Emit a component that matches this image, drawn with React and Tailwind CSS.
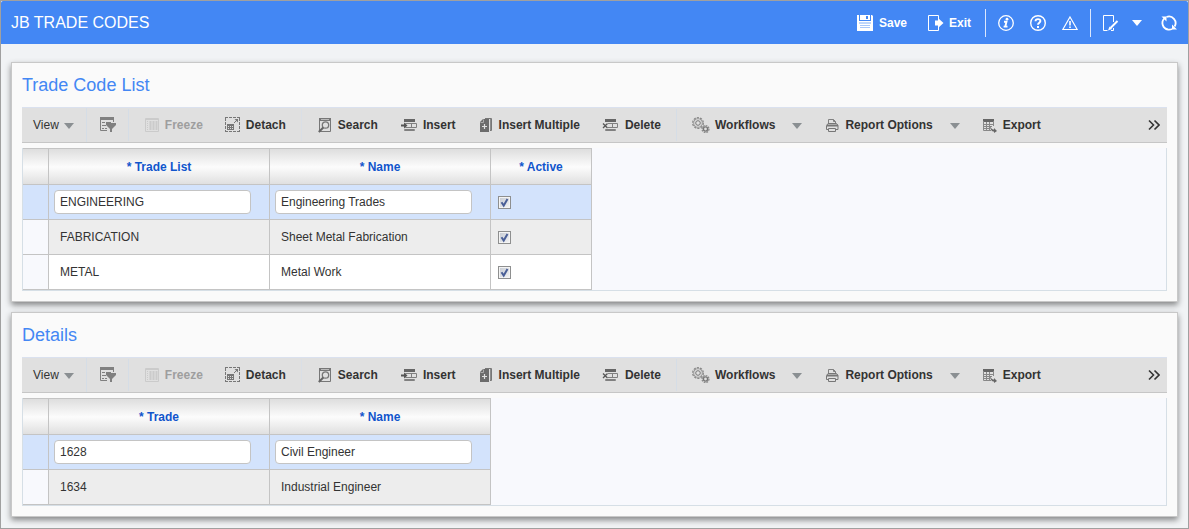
import React, { useState } from 'react';

/* ---------- header icons (white) ---------- */

const SaveIcon = () => (
    <svg width="16" height="16" viewBox="0 0 16 16" fill="none" aria-hidden="true">
        <path d="M0 0h2v6h12V0h1l1 1v15H0z" fill="#fff" />
        <path d="M3 0h10v5H3z" fill="#fff" />
        <path d="M9 1h2v3H9z" fill="#4387f4" />
        <path d="M2 8h12" stroke="#7faef8" />
        <path d="M3 10.500h10M3 12.500h10" stroke="#a9c8fa" />
    </svg>
);

const ExitIcon = () => (
    <svg width="16" height="16" viewBox="0 0 16 16" fill="none" aria-hidden="true">
        <path d="M10.500 4V.5H.5v15h10V12" stroke="#fff" />
        <path d="M7 5.500h3V3l5.500 5-5.500 5v-2.500H7z" fill="#fff" />
    </svg>
);

const InfoIcon = () => (
    <svg width="16" height="16" viewBox="0 0 16 16" fill="none" aria-hidden="true">
        <circle cx="8" cy="8" r="7.300" stroke="#fff" strokeWidth="1.300" />
        <circle cx="9" cy="4.200" r="1.400" fill="#fff" />
        <path d="M6 6.800h2.500L7.300 11.600h2.200M5.600 11.600h2" stroke="#fff" strokeWidth="1.900" />
    </svg>
);

const HelpIcon = () => (
    <svg width="16" height="16" viewBox="0 0 16 16" fill="none" aria-hidden="true">
        <circle cx="8" cy="8" r="7.300" stroke="#fff" strokeWidth="1.400" />
        <path d="M5.500 6.300C5.500 3.400 10.400 3.400 10.400 6.100 10.400 7.700 8 7.700 8 9.800" stroke="#fff" strokeWidth="1.900" />
        <path d="M7 11h2v2H7z" fill="#fff" />
    </svg>
);

const WarningIcon = () => (
    <svg width="16" height="16" viewBox="0 0 16 16" fill="none" aria-hidden="true">
        <path d="M8 2 15.200 14.500H.8z" stroke="#fff" strokeWidth="1.200" />
        <path d="M8 6v4.500M8 11.500v1.500" stroke="#fff" strokeWidth="1.600" />
    </svg>
);

const EditIcon = () => (
    <svg width="16" height="16" viewBox="0 0 16 16" fill="none" aria-hidden="true">
        <path d="M10.500 7V.5H.5v15h4M10.500 13v2.500H8" stroke="#fff" />
        <path d="M14.500 6 7.500 13" stroke="#fff" strokeWidth="2" />
        <path d="M6.500 11.500 5 15.500 9 14z" fill="#fff" />
    </svg>
);

const RefreshIcon = () => (
    <svg width="18" height="16" viewBox="0 0 18 16" fill="none" aria-hidden="true">
        <path d="M8 14.500A6.600 6.600 0 0 1 4.200 3.500" stroke="#fff" strokeWidth="1.800" />
        <path d="M6.500 2A6.600 6.600 0 0 1 14.600 11.500" stroke="#fff" strokeWidth="1.800" />
        <path d="M8 14.600A6.600 6.600 0 0 0 12 14" stroke="#fff" strokeWidth="1.800" />
        <path d="M1.500 1.500h5v5z" fill="#fff" />
        <path d="M17 14.500h-5v-5z" fill="#fff" />
    </svg>
);

/* ---------- toolbar icons (grey) ---------- */

const FilterIcon = () => (
    <svg width="18" height="16" viewBox="0 0 18 16" fill="none" aria-hidden="true">
        <path d="M1 0h14v3H1z" fill="#808080" />
        <path d="M1.500 3v10.500H8M14.500 3v2" stroke="#808080" />
        <path d="M3 5.500h3M7 5.500h5M3 8.500h4M3 11.500h2M6 11.500h2" stroke="#808080" />
        <path d="M7 6h10v2l-4 4v3h-2v-3L7 8z" fill="#808080" />
    </svg>
);

const FreezeIcon = () => (
    <svg width="16" height="16" viewBox="0 0 16 16" fill="none" aria-hidden="true">
        <path d="M1.500 1.500h13v13h-13zM1 2.500h14" stroke="#cbcbcb" />
        <path d="M3.500 4v9" stroke="#cbcbcb" strokeDasharray="1 1" />
        <path d="M6.500 4v9M9.500 4v9M12.500 4v9" stroke="#cbcbcb" strokeWidth="2" />
    </svg>
);

const DetachIcon = () => (
    <svg width="16" height="16" viewBox="0 0 16 16" fill="none" aria-hidden="true">
        <path d="M0 .5h15M0 14.500h15M.5 1v13M14.500 1v13" stroke="#777" strokeDasharray="3 1" />
        <path d="M2 7h7v6H2z" fill="#777" />
        <path d="M3 9.500h5M3 11.500h5" stroke="#e0e0e0" strokeDasharray="1 1" />
        <path d="M9 6 12 3" stroke="#777" />
        <path d="M9.500 2H13v3.500z" fill="#777" />
    </svg>
);

const SearchIcon = () => (
    <svg width="16" height="16" viewBox="0 0 16 16" fill="none" aria-hidden="true">
        <path d="M2.500 1.500h11v13h-11z" stroke="#777" />
        <path d="M2 1h12v3H2z" fill="#777" />
        <path d="M4 2.500h8" stroke="#bbb" />
        <circle cx="8.500" cy="8" r="3.200" fill="#e0e0e0" stroke="#777" strokeWidth="1.300" />
        <path d="M6.300 10.500 1.800 15" stroke="#666" strokeWidth="2" />
    </svg>
);

const InsertIcon = () => (
    <svg width="18" height="16" viewBox="0 0 18 16" fill="none" aria-hidden="true">
        <path d="M4 2h11v3H4z" fill="#666" />
        <path d="M5.500 6.500h11v4h-11zM11.500 6.500v4" stroke="#808080" />
        <path d="M4.500 12.500h10v1h-10z" stroke="#808080" />
        <path d="M1 8.500h5" stroke="#555" strokeWidth="2" />
        <path d="M4 5.500 7.500 8.500 4 11.500z" fill="#555" />
    </svg>
);

const InsertMultipleIcon = () => (
    <svg width="16" height="16" viewBox="0 0 16 16" fill="none" aria-hidden="true">
        <path d="M2 5 5 2h6v13H2z" fill="#6c6c6c" />
        <path d="M2.500 5.500h3v-3" stroke="#aaa" />
        <path d="M7 1.500h6.500v12H12" stroke="#777" />
        <path d="M12.500 2v11" stroke="#8c8c8c" />
        <path d="M6.500 7v5M4 9.500h5" stroke="#e0e0e0" strokeWidth="1.200" />
    </svg>
);

const DeleteIcon = () => (
    <svg width="18" height="16" viewBox="0 0 18 16" fill="none" aria-hidden="true">
        <path d="M3 2h11v3H3z" fill="#666" />
        <path d="M6 6.500h9.500v4H6M10.500 6.500v4" stroke="#808080" />
        <path d="M3.500 12.500h10v1h-10z" stroke="#808080" />
        <path d="M1 6.500 5.500 11M5.500 6.500 1 11" stroke="#555" strokeWidth="1.300" />
    </svg>
);

const WorkflowsIcon = () => (
    <svg width="18" height="16" viewBox="0 0 18 16" fill="none" aria-hidden="true">
        <circle cx="6" cy="6" r="5.300" stroke="#888" strokeWidth="1.300" strokeDasharray="2.200 1.100" />
        <circle cx="6" cy="6" r="4.300" stroke="#999" />
        <circle cx="6" cy="6" r="2.300" stroke="#777" />
        <circle cx="13.500" cy="12" r="3.500" stroke="#888" strokeWidth="1.200" strokeDasharray="1.800 .9" />
        <circle cx="13.500" cy="12" r="2.100" stroke="#777" strokeWidth="1.400" />
    </svg>
);

const PrintIcon = () => (
    <svg width="16" height="16" viewBox="0 0 16 16" fill="none" aria-hidden="true">
        <path d="M4.500 6.500v-4h5l2 2v2M9.500 2.500v2h2" stroke="#808080" />
        <path d="M2.500 12.500v-4l1.500-2h8.500l1.500 2v4z" stroke="#777" />
        <path d="M3 8.500h11" stroke="#777" strokeWidth="2" />
        <path d="M4.500 11.500h7v3h-7z" fill="#e0e0e0" stroke="#777" />
    </svg>
);

const ExportIcon = () => (
    <svg width="16" height="16" viewBox="0 0 16 16" fill="none" aria-hidden="true">
        <path d="M1 2h11v3H1z" fill="#666" />
        <path d="M1.500 4v9.500H9M11.500 4v5M1 7.500h11M1 9.500h9M1 11.500h7M4.500 5v9M7.500 5v9" stroke="#888" />
        <path d="M8 9c1 3 3 3.500 4 3.500V11l3 3-3 2v-1.500C10 14.500 8 12.500 8 9z" fill="#666" />
    </svg>
);

const OverflowIcon = () => (
    <svg width="12" height="12" viewBox="0 0 12 12" fill="none" aria-hidden="true">
        <path d="M1 1.500 5.500 6 1 10.500M6.500 1.500 11 6l-4.500 4.500" stroke="#333" strokeWidth="1.600" />
    </svg>
);

const Caret = ({ className }) => (
    <svg width="10" height="6" viewBox="0 0 10 6" className={className} aria-hidden="true">
        <path d="M0 0h10L5 6z" fill="currentColor" />
    </svg>
);

/* ---------- toolbar ---------- */

const ToolButton = ({ icon: Icon, label, menu, disabled }) => (
    <button
        type="button"
        disabled={disabled}
        className="flex h-full items-center gap-[5px] px-[11px] font-bold whitespace-nowrap text-[#333] disabled:text-[#9e9e9e]"
    >
        <Icon />
        {label}
        {menu && <Caret className="mt-0.5 ml-3 text-[#8a8f92]" />}
    </button>
);

const Toolbar = () => (
    <div className="flex h-9 items-center border-t border-b border-t-[#dae1ef] border-b-[#c6c6c6] bg-[#e0e0e0]">
        <button type="button" className="flex h-full items-center gap-[5px] pr-3 pl-[11px] text-[#333]">
            View
            <Caret className="mt-0.5 text-[#8a8f92]" />
        </button>
        <div className="flex h-full border-l border-[#d5dde6]">
            <button type="button" aria-label="Query by example" className="pr-[11px] pl-3">
                <FilterIcon />
            </button>
        </div>
        <div className="flex h-8 border-l border-[#d5dde6] px-1">
            <ToolButton icon={FreezeIcon} label="Freeze" disabled />
            <ToolButton icon={DetachIcon} label="Detach" />
        </div>
        <div className="flex h-8 border-l border-[#dadfe6] px-1">
            <ToolButton icon={SearchIcon} label="Search" />
            <ToolButton icon={InsertIcon} label="Insert" />
            <ToolButton icon={InsertMultipleIcon} label="Insert Multiple" />
            <ToolButton icon={DeleteIcon} label="Delete" />
        </div>
        <div className="flex h-8 border-l border-[#d5dde6] px-1">
            <ToolButton icon={WorkflowsIcon} label="Workflows" menu />
            <ToolButton icon={PrintIcon} label="Report Options" menu />
            <ToolButton icon={ExportIcon} label="Export" />
        </div>
        <button type="button" aria-label="More actions" className="ml-auto px-[7px]">
            <OverflowIcon />
        </button>
    </div>
);

/* ---------- tables ---------- */

const Checkbox = ({ label, checked, onChange }) => (
    <span className="relative block size-[13px]">
        <input
            type="checkbox"
            aria-label={label}
            checked={checked}
            onChange={onChange}
            className="peer block size-[13px] appearance-none border border-[#8e8f8f] bg-linear-to-br from-[#c4c9d2] to-[#f6f6f6] shadow-[inset_0_0_0_1px_#f4f4f4]"
        />
        <svg
            width="13"
            height="13"
            viewBox="0 0 13 13"
            fill="none"
            aria-hidden="true"
            className="pointer-events-none absolute inset-0 hidden peer-checked:block"
        >
            <path d="M3.500 6.200 5.700 9.500 9.500 3" stroke="#4a5f97" strokeWidth="2" />
        </svg>
    </span>
);

const DataTable = ({ caption, columns, initialRows }) => {
    const [rows, setRows] = useState(initialRows);

    const updateCell = (rowIdx, key, value) => {
        setRows(rows.map((row, idx) => (idx === rowIdx ? { ...row, [key]: value } : row)));
    };

    const renderCell = (row, rowIdx, col) => {
        if (col.type === 'checkbox') {
            return (
                <td key={col.key} className="border-r border-b border-[#c4c4c4] pl-[7px]">
                    <Checkbox
                        label={`Active ${row.code}`}
                        checked={row[col.key]}
                        onChange={(e) => updateCell(rowIdx, col.key, e.target.checked)}
                    />
                </td>
            );
        }
        // The first row is the selected one and is open for editing
        if (rowIdx === 0) {
            return (
                <td key={col.key} className="border-r border-b border-[#c4c4c4] pr-[18px] pl-[5px]">
                    <input
                        type="text"
                        aria-label={col.label}
                        value={row[col.key]}
                        onChange={(e) => updateCell(rowIdx, col.key, e.target.value)}
                        className="block h-6 w-full rounded border border-[#c4c4c4] bg-white px-[5px] text-xs text-[#333]"
                    />
                </td>
            );
        }
        return (
            <td key={col.key} className="border-r border-b border-[#c4c4c4] px-[11px]">
                {row[col.key]}
            </td>
        );
    };

    return (
        <div className="mt-[5px] border-x border-b border-[#d6dfe6] bg-[#f8f9fd]">
            <table aria-label={caption} className="table-fixed border-separate border-spacing-0 border-t border-[#c4c4c4]">
                <colgroup>
                    <col className="w-[26px]" />
                    {columns.map((col) => (
                        <col key={col.key} className={col.type === 'checkbox' ? 'w-[101px]' : 'w-[221px]'} />
                    ))}
                </colgroup>
                <thead>
                    <tr className="h-9 bg-linear-to-b from-[#dedede] via-[#fcfcfc] to-[#dedede]">
                        <td className="border-r border-b border-[#c4c4c4]" />
                        {columns.map((col) => (
                            <th key={col.key} scope="col" className="border-r border-b border-[#c4c4c4] font-bold text-[#1155cc]">
                                * {col.label}
                            </th>
                        ))}
                    </tr>
                </thead>
                <tbody>
                    {rows.map((row, rowIdx) => (
                        <tr key={rowIdx} className="h-[35px] bg-white first:bg-[#d3e3fc] even:bg-[#ededed]">
                            <td className={`border-r border-b border-[#c4c4c4] ${rowIdx > 0 ? 'bg-[#f8f9fd]' : ''}`} />
                            {columns.map((col) => renderCell(row, rowIdx, col))}
                        </tr>
                    ))}
                </tbody>
            </table>
        </div>
    );
};

const Panel = ({ title, children }) => (
    <section className="border border-[#c8c8c8] bg-[#fafafa] px-2.5 pb-2.5 shadow-[0_3px_6px_rgba(0,0,0,0.45)]">
        <h2 className="flex h-11 items-center text-lg text-[#4387f4]">{title}</h2>
        <Toolbar />
        {children}
    </section>
);

const TRADE_LIST_COLUMNS = [
    { key: 'code', label: 'Trade List' },
    { key: 'name', label: 'Name' },
    { key: 'active', label: 'Active', type: 'checkbox' },
];

const TRADE_LISTS = [
    { code: 'ENGINEERING', name: 'Engineering Trades', active: true },
    { code: 'FABRICATION', name: 'Sheet Metal Fabrication', active: true },
    { code: 'METAL', name: 'Metal Work', active: true },
];

const TRADE_COLUMNS = [
    { key: 'code', label: 'Trade' },
    { key: 'name', label: 'Name' },
];

const TRADES = [
    { code: '1628', name: 'Civil Engineer' },
    { code: '1634', name: 'Industrial Engineer' },
];

const Header = () => (
    <header className="flex h-[43px] items-center justify-between rounded-t-xs bg-[#4387f4] px-2.5 pt-px text-white">
        <h1 className="text-base">JB TRADE CODES</h1>
        <div className="flex items-center">
            <button type="button" className="mr-[21px] flex items-center gap-1.5 font-bold">
                <SaveIcon />
                Save
            </button>
            <button type="button" className="flex items-center gap-[5px] font-bold">
                <ExitIcon />
                Exit
            </button>
            <div className="ml-3.5 flex h-7 items-center gap-4 border-l border-[#dbe7fd] px-3">
                <button type="button" aria-label="Information">
                    <InfoIcon />
                </button>
                <button type="button" aria-label="Help">
                    <HelpIcon />
                </button>
                <button type="button" aria-label="Warnings">
                    <WarningIcon />
                </button>
            </div>
            <div className="flex h-7 items-center gap-[18px] border-l border-[#dbe7fd] pl-3">
                <button type="button" aria-label="Notes" className="flex items-center gap-[13px]">
                    <EditIcon />
                    <Caret />
                </button>
                <button type="button" aria-label="Refresh">
                    <RefreshIcon />
                </button>
            </div>
        </div>
    </header>
);

const App = () => (
    <div className="min-h-screen border border-[#a0a0a0] bg-[#f1f3f5] font-['Liberation_Sans',Arial,sans-serif] text-xs text-[#333]">
        <Header />
        <main className="flex flex-col gap-2.5 px-2.5 pt-[18px] pb-[11px]">
            <Panel title="Trade Code List">
                <DataTable caption="Trade Code List" columns={TRADE_LIST_COLUMNS} initialRows={TRADE_LISTS} />
            </Panel>
            <Panel title="Details">
                <DataTable caption="Details" columns={TRADE_COLUMNS} initialRows={TRADES} />
            </Panel>
        </main>
    </div>
);

export default App;
